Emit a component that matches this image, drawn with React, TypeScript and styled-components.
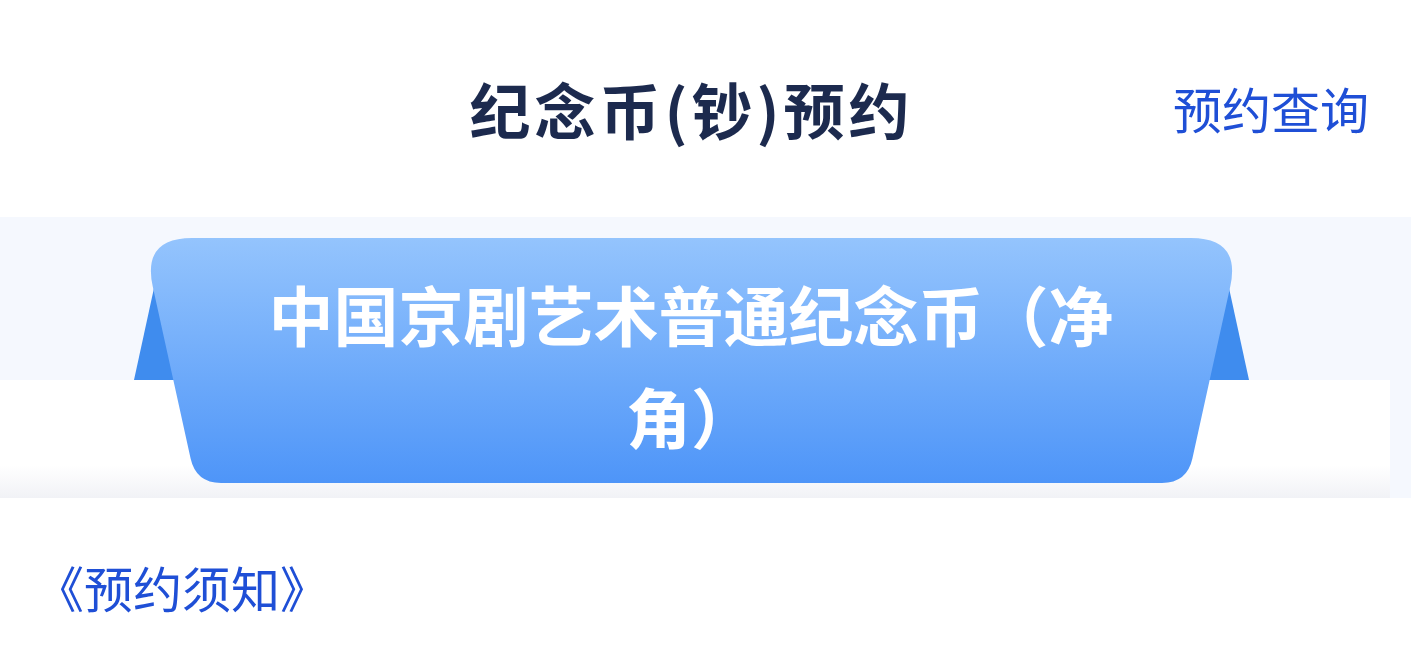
import React from 'react';
import styled, { createGlobalStyle } from 'styled-components';

const GlobalStyle = createGlobalStyle`
  html, body {
    margin: 0;
    padding: 0;
    background: #ffffff;
  }
  body {
    font-family: "Noto Sans CJK SC", "Noto Sans", sans-serif;
  }
`;

const Page = styled.div`
  width: 100%;
  min-height: 655px;
  background: #ffffff;
`;

const Header = styled.header`
  display: grid;
  grid-template-columns: 1fr auto 1fr;
  align-items: center;
  height: 217px;
  padding-right: 28px;
  box-sizing: border-box;
`;

const Title = styled.h1`
  grid-column: 2;
  margin: 0;
  font-size: 61px;
  font-weight: 700;
  color: #1c2a4e;
  letter-spacing: 4px;
  line-height: 1.2;
`;

const QueryLink = styled.a`
  grid-column: 3;
  justify-self: end;
  margin-right: 14px;
  font-size: 49px;
  color: #1f4fd6;
  text-decoration: none;
  line-height: 1.2;
  cursor: pointer;
`;

const Band = styled.section`
  display: grid;
  height: 281px;
  background: #f5f8fe;
`;

const Card = styled.div`
  grid-area: 1 / 1;
  align-self: end;
  width: calc(100% - 21px);
  height: 118px;
  background: linear-gradient(to bottom, #ffffff 72%, #f1f2f6 100%);
`;

const Ribbon = styled.div`
  grid-area: 1 / 1;
  align-self: start;
  justify-self: center;
  position: relative;
  width: 1115px;
  height: 245px;
  margin: 21px 29px 0 0;
  box-sizing: border-box;
  padding: 24px 120px 0;
`;

const RibbonShape = styled.svg`
  position: absolute;
  inset: 0;
  width: 100%;
  height: 100%;
  z-index: 0;
`;

const RibbonTitle = styled.h2`
  position: relative;
  z-index: 1;
  margin: 0;
  font-size: 65px;
  font-weight: 700;
  line-height: 102px;
  color: #ffffff;
  text-align: center;
`;

const Notice = styled.a`
  display: inline-block;
  margin: 53px 0 0 35px;
  font-size: 49px;
  line-height: 72px;
  color: #1f4fd6;
  text-decoration: none;
  cursor: pointer;
`;

const RIBBON_PATH =
  'M18.8 48.8 Q8 0 58 0 L1057 0 Q1107 0 1096.2 48.8 L1058.4 220.6 Q1053 245 1028 245 L87 245 Q62 245 56.6 220.6 Z';

const RibbonBackground: React.FC = () => (
  <RibbonShape viewBox="0 0 1115 245" preserveAspectRatio="none" aria-hidden="true">
    <defs>
      <linearGradient id="ribbonFill" x1="0" y1="0" x2="0" y2="1">
        <stop offset="0%" stopColor="#94c4fd" />
        <stop offset="100%" stopColor="#4e95f8" />
      </linearGradient>
    </defs>
    <polygon points="0,142 20,50 60,142" fill="#3f8cee" />
    <polygon points="1115,142 1095,50 1055,142" fill="#3f8cee" />
    <path d={RIBBON_PATH} fill="url(#ribbonFill)" />
  </RibbonShape>
);

const App: React.FC = () => (
  <Page>
    <GlobalStyle />
    <Header>
      <Title>纪念币(钞)预约</Title>
      <QueryLink>预约查询</QueryLink>
    </Header>
    <Band>
      <Card />
      <Ribbon>
        <RibbonBackground />
        <RibbonTitle>中国京剧艺术普通纪念币（净角）</RibbonTitle>
      </Ribbon>
    </Band>
    <Notice>《预约须知》</Notice>
  </Page>
);

export default App;
